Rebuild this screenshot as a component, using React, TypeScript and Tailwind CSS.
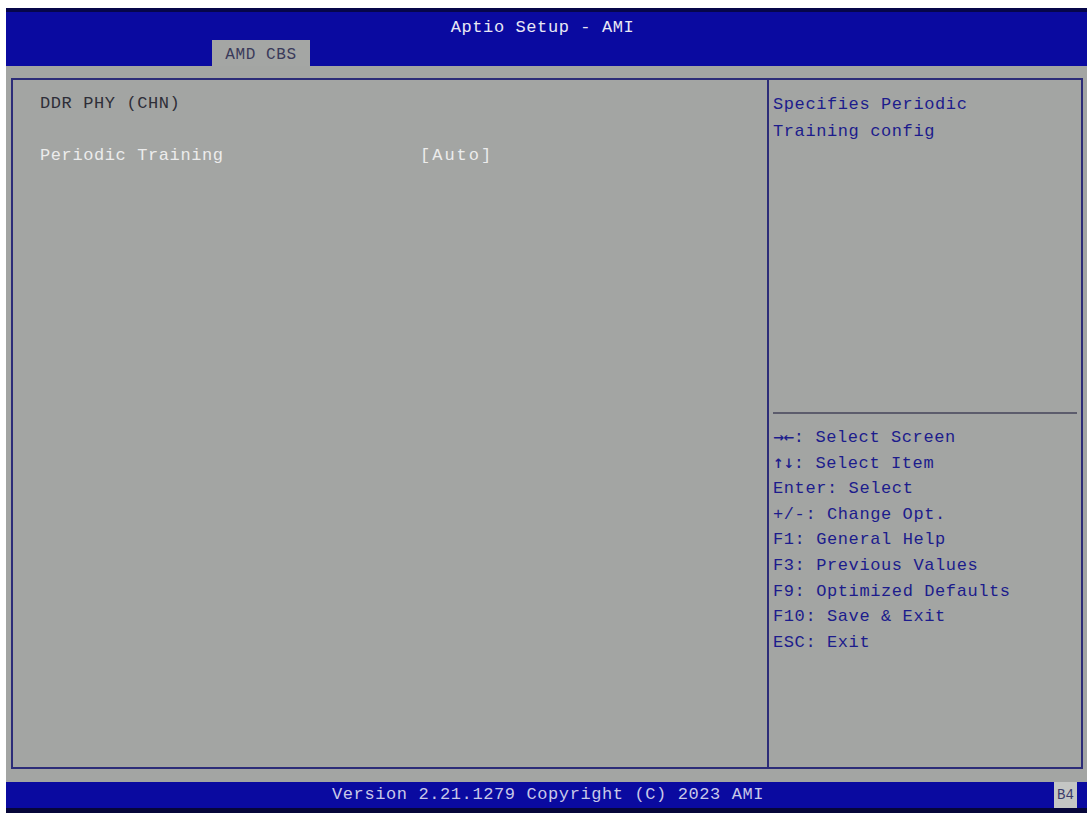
export default function App() {
  const help = [
    ["\u2192\u2190", ": Select Screen"],
    ["\u2191\u2193", ": Select Item"],
    ["Enter", ": Select"],
    ["+/-", ": Change Opt."],
    ["F1", ": General Help"],
    ["F3", ": Previous Values"],
    ["F9", ": Optimized Defaults"],
    ["F10", ": Save & Exit"],
    ["ESC", ": Exit"],
  ];

  return (
    <div
      className="w-[1092px] h-[821px] bg-white pt-[8px] pl-[6px] overflow-hidden"
      style={{ fontFamily: '"Liberation Mono", "DejaVu Sans Mono", monospace' }}
    >
      <div className="w-[1081px] flex flex-col text-[17px] tracking-[0.6px]">
        {/* Title bar */}
        <div className="h-[58px] bg-[#0a0aa0] border-t-[4px] border-[#06064a] relative flex justify-center">
          <span className="mt-[3px] ml-[-8px] text-[#e8e8f4]">Aptio Setup - AMI</span>
          <div className="absolute left-[206px] bottom-0 w-[98px] h-[26px] bg-[#a4a6a4] flex items-center justify-center pt-[4px] text-[#3a3a5a] text-[16px]">
            AMD CBS
          </div>
        </div>

        {/* Body */}
        <div className="h-[716px] bg-[#a3a5a3] pt-[12px] pl-[5px] pr-[4px] pb-[13px]">
          <div className="h-full flex border-2 border-[#2c2c78]">
            {/* Left pane */}
            <div className="w-[756px] border-r-2 border-[#2c2c78] pl-[27px] pt-[11px] leading-[26px]">
              <div className="text-[#2e2e38]">DDR PHY (CHN)</div>
              <div className="flex mt-[26px] text-[#ececec]">
                <span className="w-[380px]">Periodic Training</span>
                <span className="tracking-[2px]">[Auto]</span>
              </div>
            </div>
            {/* Right pane */}
            <div className="flex-1 flex flex-col text-[#1c1c8c]">
              <div className="h-[332px] pl-[4px] pt-[11px] leading-[27px]">
                <div>Specifies Periodic</div>
                <div>Training config</div>
              </div>
              <div className="mx-[4px] border-t-2 border-[#5c5c6c]" />
              <div className="pl-[4px] pt-[11px] leading-[25.6px]">
                {help.map(([k, v]) => (
                  <div key={k}>
                    {k.length === 2 && k[0] !== "F" ? (
                      <span className="font-bold tracking-[-0.5px] text-[13px]" style={{ fontFamily: '"DejaVu Sans", sans-serif' }}>
                        {k}
                      </span>
                    ) : (
                      <span>{k}</span>
                    )}
                    {v}
                  </div>
                ))}
              </div>
            </div>
          </div>
        </div>

        {/* Footer */}
        <div className="h-[26px] bg-[#0a0aa0] flex items-center relative">
          <span className="ml-[326px] text-[#c8c8e8]">Version 2.21.1279 Copyright (C) 2023 AMI</span>
          <div className="absolute right-[10px] top-0 h-full w-[23px] bg-[#c4c6c4] flex items-center justify-center text-[#3a3a6a] text-[14px] tracking-normal">
            B4
          </div>
        </div>
        <div className="h-[5px] bg-[#06063a]" />
      </div>
    </div>
  );
}
